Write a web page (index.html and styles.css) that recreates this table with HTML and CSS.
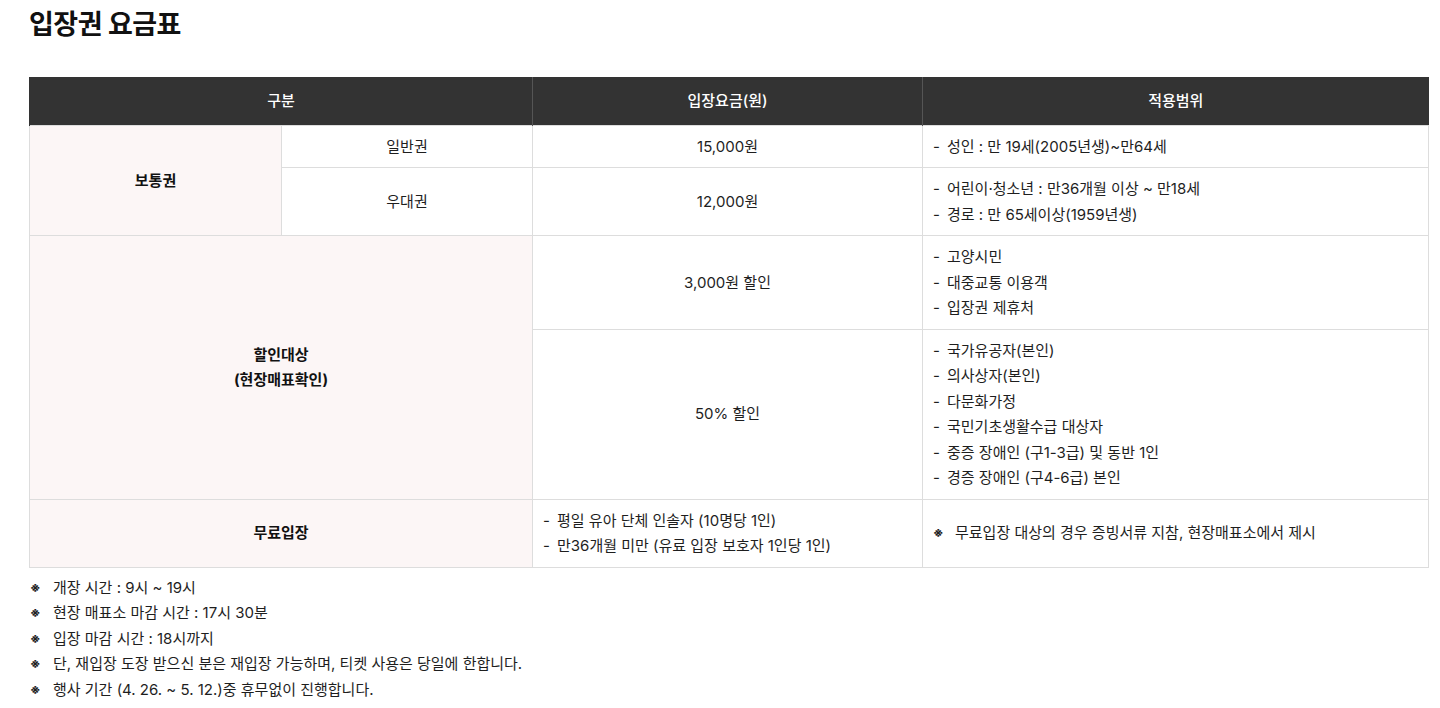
FILE: index.html
```html
<!DOCTYPE html>
<html lang="ko">
<head>
<meta charset="utf-8">
<link rel="stylesheet" href="styles.css">
</head>
<body>
<div class="page">
  <h2 class="title">입장권 요금표</h2>
  <table class="fee">
    <colgroup>
      <col class="c1"><col class="c2"><col class="c3"><col class="c4">
    </colgroup>
    <thead>
      <tr><th colspan="2">구분</th><th>입장요금(원)</th><th>적용범위</th></tr>
    </thead>
    <tbody>
      <tr>
        <td rowspan="2" class="cat">보통권</td>
        <td class="ctr">일반권</td>
        <td class="ctr">15,000원</td>
        <td class="lst"><ul><li>성인 : 만 19세(2005년생)~만64세</li></ul></td>
      </tr>
      <tr>
        <td class="ctr">우대권</td>
        <td class="ctr">12,000원</td>
        <td class="lst"><ul><li>어린이·청소년 : 만36개월 이상 ~ 만18세</li><li>경로 : 만 65세이상(1959년생)</li></ul></td>
      </tr>
      <tr>
        <td rowspan="2" colspan="2" class="cat">할인대상<br>(현장매표확인)</td>
        <td class="ctr">3,000원 할인</td>
        <td class="lst"><ul><li>고양시민</li><li>대중교통 이용객</li><li>입장권 제휴처</li></ul></td>
      </tr>
      <tr>
        <td class="ctr">50% 할인</td>
        <td class="lst"><ul><li>국가유공자(본인)</li><li>의사상자(본인)</li><li>다문화가정</li><li>국민기초생활수급 대상자</li><li>중증 장애인 (구1-3급) 및 동반 1인</li><li>경증 장애인 (구4-6급) 본인</li></ul></td>
      </tr>
      <tr>
        <td colspan="2" class="cat">무료입장</td>
        <td class="lst"><ul><li>평일 유아 단체 인솔자 (10명당 1인)</li><li>만36개월 미만 (유료 입장 보호자 1인당 1인)</li></ul></td>
        <td class="lst"><p class="note">무료입장 대상의 경우 증빙서류 지참, 현장매표소에서 제시</p></td>
      </tr>
    </tbody>
  </table>
  <ul class="notes">
    <li>개장 시간 : 9시 ~ 19시</li>
    <li>현장 매표소 마감 시간 : 17시 30분</li>
    <li>입장 마감 시간 : 18시까지</li>
    <li>단, 재입장 도장 받으신 분은 재입장 가능하며, 티켓 사용은 당일에 한합니다.</li>
    <li>행사 기간 (4. 26. ~ 5. 12.)중 휴무없이 진행합니다.</li>
  </ul>
</div>
</body>
</html>
```
FILE: styles.css
```css
* { box-sizing: border-box; }
html, body { margin: 0; padding: 0; background: #fff; }
body {
  font-family: Inter, "Noto Sans CJK KR", sans-serif;
  color: #1e1e1e;
  font-size: 15px;
}
.page { padding: 0 0 0 29px; width: 1428px; }
.title {
  margin: 0;
  padding-top: 8px;
  height: 77px;
  font-size: 27px;
  font-weight: 700;
  line-height: 34px;
  color: #111;
  letter-spacing: -0.5px;
}
.fee {
  width: 1399px;
  border-collapse: collapse;
  table-layout: fixed;
}
.c1 { width: 252px; }
.c2 { width: 251px; }
.c3 { width: 390px; }
.c4 { width: 506px; }
.fee th {
  background: #333;
  color: #fff;
  font-weight: 500;
  height: 48px;
  padding: 0;
  font-size: 15px;
  border-left: 1px solid #555;
  line-height: 25.5px;
}
.fee th:first-child { border-left: 1px solid #333; }
.fee td {
  border: 1px solid #ddd;
  padding: 8px 10px;
  line-height: 25.5px;
  font-size: 15px;
  vertical-align: middle;
}
.cat {
  background: #fcf6f6;
  text-align: center;
  font-weight: 700;
  color: #111;
}
.ctr { text-align: center; }
.lst ul { margin: 0; padding: 0; list-style: none; }
.lst li { padding-left: 14px; position: relative; }
.lst li::before { content: "-"; position: absolute; left: 0; top: 0; }
.note { margin: 0; padding-left: 22px; position: relative; }
.note::before { content: "※"; position: absolute; left: 0; font-size: 13px; font-weight: 700; }
.notes {
  margin: 7px 0 0;
  padding: 0;
  list-style: none;
  font-size: 15px;
  line-height: 25.5px;
}
.notes li { padding-left: 24px; position: relative; }
.notes li::before { content: "※"; position: absolute; left: 1px; font-size: 13px; font-weight: 700; }
```
